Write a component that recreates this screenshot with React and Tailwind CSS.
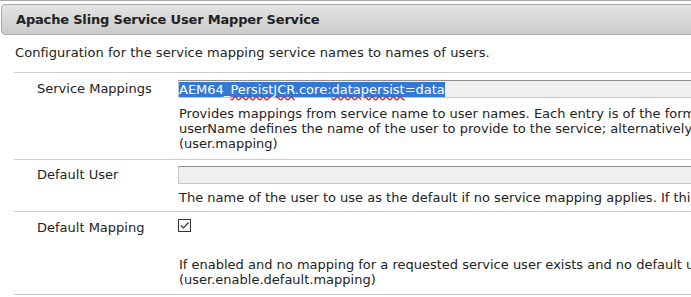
export default function App() {
  const font = { fontFamily: '"DejaVu Sans", Verdana, sans-serif' };
  return (
    <div className="w-[691px] h-[297px] overflow-hidden bg-white text-[13px] leading-[15px] text-[#222]" style={font}>
      <div className="border-t border-[#aaaaaa] pt-[3px]">
        <div className="ml-[1px] w-[720px] h-[31px] rounded-[4px] border border-[#a8a8a8] bg-gradient-to-b from-[#e4e4e4] to-[#cbcbcb] flex items-center pl-[14px]">
          <span className="font-bold text-[#222] tracking-[-0.18px]">Apache Sling Service User Mapper Service</span>
        </div>
      </div>
      <div className="pl-[15px] pt-[10px] pb-[12px] tracking-[0.05px]">Configuration for the service mapping service names to names of users.</div>
      <div className="ml-[14px] border-t border-[#cccccc]">
        <div className="flex border-b border-[#cccccc] pt-[7px] pb-[8px]">
          <div className="w-[164px] shrink-0 pl-[23px] pt-[1px]">Service Mappings</div>
          <div className="flex-1 min-w-0">
            <div className="w-[600px] h-[18px] border-t border-b border-l border-t-[#8f8f8f] border-b-[#c8c8c8] border-l-[#c8c8c8] bg-[#efefef] flex items-center whitespace-nowrap">
              <span className="bg-[#3478d6] text-white leading-[15px]">
                AEM64_<span className="underline decoration-wavy decoration-[#e02020] underline-offset-2">PersistJCR</span>.core:<span className="underline decoration-wavy decoration-[#e02020] underline-offset-2">datapersist</span>=data
              </span>
            </div>
            <div className="mt-[8px] whitespace-nowrap pl-[1px]">
              <div>Provides mappings from service name to user names. Each entry is of the form</div>
              <div>userName defines the name of the user to provide to the service; alternatively</div>
              <div>(user.mapping)</div>
            </div>
          </div>
        </div>
        <div className="flex border-b border-[#cccccc] pt-[6px] pb-[6px]">
          <div className="w-[164px] shrink-0 pl-[23px] pt-[1px]">Default User</div>
          <div className="flex-1 min-w-0">
            <div className="w-[600px] h-[18px] border-t border-b border-l border-t-[#8f8f8f] border-b-[#c8c8c8] border-l-[#c8c8c8] bg-[#efefef]"></div>
            <div className="mt-[6px] whitespace-nowrap pl-[1px]">The name of the user to use as the default if no service mapping applies. If this</div>
          </div>
        </div>
        <div className="flex border-b border-[#cccccc] pt-[7px] pb-[7px]">
          <div className="w-[164px] shrink-0 pl-[23px] pt-[1px]">Default Mapping</div>
          <div className="flex-1 min-w-0">
            <div className="w-[13px] h-[13px] border border-[#333] bg-white flex items-center justify-center">
              <svg width="11" height="11" viewBox="0 0 11 11"><path d="M2 5.5 L4.5 8 L9.5 2.5" fill="none" stroke="#333" strokeWidth="1.2" /></svg>
            </div>
            <div className="mt-[25px] whitespace-nowrap pl-[1px]">
              <div>If enabled and no mapping for a requested service user exists and no default user</div>
              <div>(user.enable.default.mapping)</div>
            </div>
          </div>
        </div>
      </div>
    </div>
  );
}
